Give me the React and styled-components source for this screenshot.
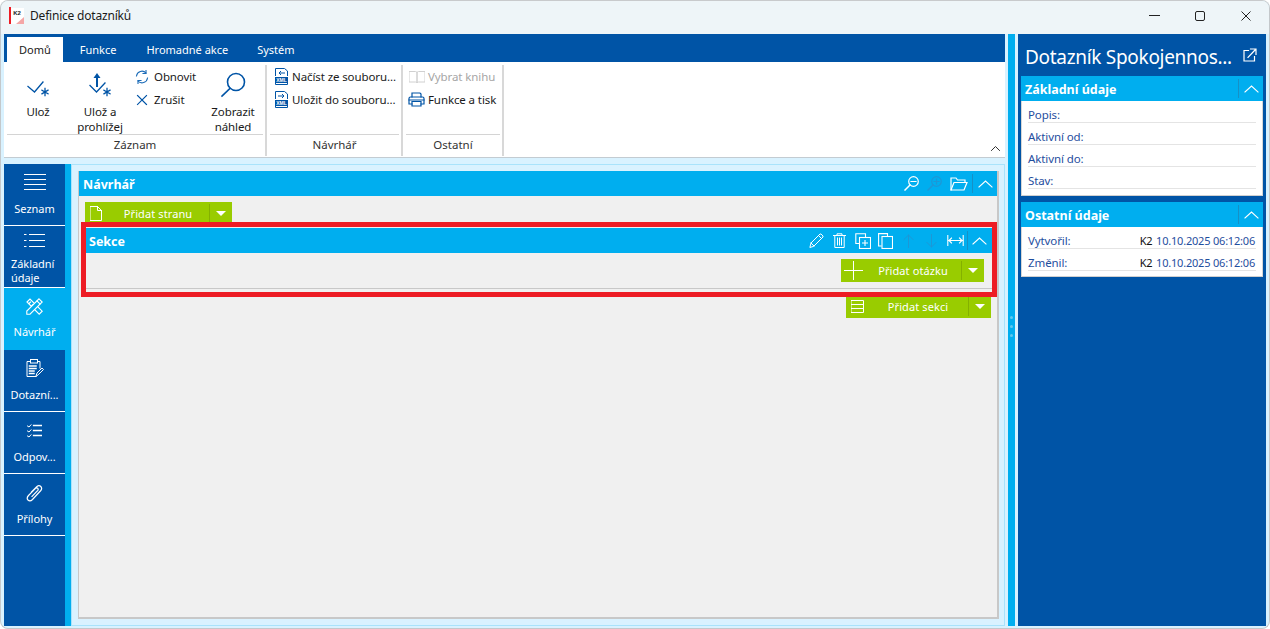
import React from "react";
import styled, { createGlobalStyle } from "styled-components";

const BLUE = "#0054a6";
const CYAN = "#00aeef";
const GREEN = "#99cc00";
const LIGHT = "#d9f2ff";

const Global = createGlobalStyle`
  html, body { margin: 0; padding: 0; background: #fff; }
  * { box-sizing: border-box; }
  body { font-family: "Noto Sans", "Open Sans", sans-serif; font-size: 12px; color: #1a1a1a; overflow: hidden; }
`;

const Win = styled.div`
  width: 1270px; height: 629px; display: flex; flex-direction: column;
  border: 1px solid #c4c8cb; border-top-color: #c8cacc; border-radius: 8px;
  overflow: hidden; background: ${LIGHT};
`;
const TitleBar = styled.div`
  height: 33px; flex: none; display: flex; align-items: center; padding: 0 0 3px 8px;
  background: #eef5f8;
`;
const TitleText = styled.span`
  margin-left: 5px; font-size: 12px; letter-spacing: -0.2px; color: #1a1a1a; flex: 1; padding-bottom: 2px;
`;
const WinBtn = styled.div`
  width: 46px; height: 28px; display: flex; align-items: center; justify-content: center;
`;
const Body = styled.div`
  flex: 1; display: flex; padding: 0 3px 2px 3px; min-height: 0;
`;
const LeftCol = styled.div`
  width: 1001px; display: flex; flex-direction: column;
`;
const Ribbon = styled.div`
  height: 124px; flex: none; display: flex; flex-direction: column; position: relative;
  border-bottom: 1px solid #c3ccd2; background: #fff;
`;
const TabBar = styled.div`
  height: 28px; flex: none; background: ${BLUE}; display: flex; align-items: flex-end; padding-left: 3px;
`;
const Tab = styled.div`
  height: 25px; padding: 0 ${p => p.$pad || 0}px; margin-right: ${p => p.$mr || 0}px;
  display: flex; align-items: center; font-size: 11px;
  color: ${p => (p.$active ? "#1a1a1a" : "#fff")};
  background: ${p => (p.$active ? "#fff" : "transparent")};
`;
const Groups = styled.div`
  flex: 1; display: flex; padding-top: 3px;
`;
const Group = styled.div`
  width: ${p => p.$w}px; height: 91px; padding: 0 2px 0 3px; border-right: 2px solid #d8d8d8;
  display: flex; flex-direction: column;
`;
const GroupBody = styled.div`
  height: 70px; display: flex; border-bottom: 1px solid #d4d4d4; flex: none;
`;
const GroupLabel = styled.div`
  flex: 1; display: flex; align-items: center; justify-content: center; color: #333; font-size: 11.5px; padding-bottom: 3px;
`;
const BigBtn = styled.div`
  width: ${p => p.$w}px; flex: none; display: flex; flex-direction: column; align-items: center;
  padding-top: 7px; line-height: 15px; font-size: 11.5px; text-align: center; letter-spacing: -0.1px;
`;
const IconSlot = styled.div`
  height: ${p => p.$h || 30}px; display: flex; align-items: ${p => p.$align || "center"}; justify-content: center;
`;
const SmallCol = styled.div`
  display: flex; flex-direction: column; width: ${p => p.$w}px; flex: none;
`;
const SmallBtn = styled.div`
  height: 23px; display: flex; align-items: center; gap: ${p => p.$gap || 3}px; padding-left: ${p => p.$pl || 0}px;
  font-size: 11.5px; letter-spacing: -0.1px; white-space: nowrap;
  color: ${p => (p.$off ? "#a6a6a6" : "#1a1a1a")};
`;
const Collapse = styled.div`
  position: absolute; right: 3px; bottom: 2px; width: 14px; height: 14px; display: flex; align-items: center; justify-content: center;
`;
const Workspace = styled.div`
  margin-top: 6px; flex: 1; display: flex; min-height: 0;
`;
const Side = styled.div`
  width: 67px; flex: none; background: linear-gradient(to right, ${BLUE} 61px, ${CYAN} 61px); display: flex; flex-direction: column;
`;
const SideItem = styled.div`
  height: 62px; flex: none; width: 61px; background: ${p => (p.$active ? CYAN : BLUE)};
  display: flex; flex-direction: column; align-items: center; color: #fff;
  border-bottom: 1px solid ${p => (p.$active ? CYAN : "#fff")};
  font-size: 11px; line-height: 14px; text-align: center; padding-top: ${p => p.$pt || 8}px;
`;
const SideLabel = styled.div`
  margin-top: ${p => p.$mt || 9}px; padding-left: ${p => (p.$left ? "7px" : 0)}; width: 100%; letter-spacing: -0.05px;
  text-align: ${p => (p.$left ? "left" : "center")};
`;
const Main = styled.div`
  flex: 1; border: 1px solid #a9e3fb; background: ${LIGHT}; padding: 6px 5px 6px 6px; display: flex; min-width: 0;
`;
const Panel = styled.div`
  flex: 1; background: #f0f0f0; border-right: 2px solid #c8c8c8; border-bottom: 2px solid #c8c8c8; border-left: 1px solid #c8c8c8;
  display: flex; flex-direction: column;
`;
const Bar = styled.div`
  height: 25px; flex: none; background: ${CYAN}; color: #fff; display: flex; align-items: center;
  font-weight: 700; font-size: 12.5px; padding-left: ${p => p.$pl || 4}px; padding-right: ${p => p.$pr || 0}px; margin-top: ${p => p.$mt || 0}px;
`;
const BarTitle = styled.div`flex: 1; padding-top: 2px;`;
const BarIcon = styled.div`
  width: ${p => p.$w || 23}px; height: 25px; display: flex; align-items: center; justify-content: center; flex: none;
`;
const BarSep = styled.div`
  width: 1px; height: 19px; background: #1690c6; flex: none;
`;
const ChevBox = styled.div`
  width: ${p => p.$w || 24}px; height: 25px; display: flex; align-items: center; justify-content: center; flex: none;
`;
const PageRow = styled.div`
  height: 26px; padding: 6px 0 0 6px; overflow: hidden; flex: none;
`;
const AddBtn = styled.div`
  width: ${p => p.$w}px; height: 23px; background: ${GREEN}; color: #fff; display: flex; align-items: center; font-size: 11px; letter-spacing: 0.1px;
`;
const AddIcon = styled.div`
  width: ${p => p.$w || 28}px; height: 23px; display: flex; align-items: center; justify-content: center; flex: none;
`;
const AddText = styled.div`flex: 1; text-align: center;`;
const AddSep = styled.div`width: 1px; height: 19px; background: #84b000; flex: none;`;
const AddArrow = styled.div`
  width: 22px; height: 23px; flex: none; display: flex; align-items: center; justify-content: center;
  &::before { content: ""; border-left: 5px solid transparent; border-right: 5px solid transparent; border-top: 5px solid #fff; }
`;
const Highlight = styled.div`
  margin-left: 2px; height: 75px; flex: none; border: 5px solid #ed1c24;
  background: #f0f0f0; display: flex; flex-direction: column;
`;
const SectionBody = styled.div`
  flex: 1; margin-top: 1px; display: flex; flex-direction: column;
`;
const SectionRow = styled.div`
  height: 35px; flex: none; padding: 5px 8px 0 0; display: flex; justify-content: flex-end; border-bottom: 1px solid #c8c8c8;
`;
const BottomRow = styled.div`
  height: 21px; flex: none; overflow: hidden; display: flex; justify-content: flex-end; align-items: flex-end; padding-right: 6px;
`;
const Splitter = styled.div`
  width: 13px; flex: none; padding: 0 3px; display: flex; background: ${LIGHT};
`;
const SplitBar = styled.div`
  width: 7px; background: ${CYAN}; display: flex; flex-direction: column; align-items: center; padding-top: 282px; gap: 6px;
`;
const Dot = styled.div`width: 3px; height: 3px; border-radius: 50%; background: #5ec9ef;`;
const Right = styled.div`
  width: 248px; flex: none; background: ${BLUE}; padding: 0 3px; display: flex; flex-direction: column;
`;
const RightTitle = styled.div`
  height: 42px; display: flex; align-items: flex-end; color: #fff; font-size: 19px; line-height: 28px; padding: 0 0 5px 4px; justify-content: space-between; letter-spacing: -0.3px;
`;
const Ext = styled.div`width: 14px; margin-right: 6px; display: flex; align-self: flex-end; padding-bottom: 9px;`;
const Card = styled.div`
  background: #fff; border-left: 1px solid #d6d6d6; border-right: 1px solid #d6d6d6; border-bottom: 1px solid #d0d0d0;
  padding: 0 6px; height: ${p => p.$h}px; margin-bottom: 6px;
`;
const CardWrap = styled.div`display: flex; flex-direction: column;`;
const Field = styled.div`
  height: 22px; border-bottom: 1px solid #e4e4e4; display: flex; align-items: center; justify-content: space-between;
  color: #1f4e9e; font-size: 11.5px; letter-spacing: -0.1px; padding: 5px 0 0 0;
`;
const Stamp = styled.span`
  color: #1f4e9e; font-size: 11px; letter-spacing: -0.2px; padding-right: 1px;
  b { font-weight: 400; color: #111; margin-right: 1px; }
`;

const Svg = ({ w = 24, h = 24, c = BLUE, sw = 1.3, vb, children }) => (
  <svg width={w} height={h} viewBox={vb || `0 0 ${w} ${h}`} fill="none" stroke={c} strokeWidth={sw} strokeLinecap="square">
    {children}
  </svg>
);
const Star = ({ x, y, c = BLUE }) => (
  <g stroke={c} strokeWidth="1.3">
    <path d={`M${x} ${y - 3.5}V${y + 3.5}M${x - 3} ${y - 1.8}L${x + 3} ${y + 1.8}M${x + 3} ${y - 1.8}L${x - 3} ${y + 1.8}`} />
  </g>
);
const SaveIcon = () => (
  <Svg w={24} h={22}><path d="M2 9.5L8.5 15L17 5" /><Star x={19} y={15} /></Svg>
);
const SaveViewIcon = () => (
  <Svg w={24} h={28}>
    <path d="M2 13.5L8.5 20L17 11" />
    <path d="M9 14V4" strokeWidth="2" />
    <path d="M9 1L5.5 6H12.5Z" fill={BLUE} stroke="none" />
    <Star x={19} y={20} />
  </Svg>
);
const RefreshIcon = () => (
  <Svg w={14} h={14} sw={1.1} c="#1c6cb8">
    <path d="M1.5 6A5.5 5.5 0 0 1 11 3" /><path d="M11 .5V3.5H8" />
    <path d="M12.5 8A5.5 5.5 0 0 1 3 11" /><path d="M3 13.5V10.500H6" />
  </Svg>
);
const CrossIcon = () => <Svg w={12} h={12} sw={1.1}><path d="M1.500 1.500L10.500 10.500M10.500 1.500L1.500 10.500" /></Svg>;
const SearchIcon = () => (
  <Svg w={26} h={26} sw={1.6}><circle cx="16" cy="10" r="8.500" /><path d="M10 16.500L2 24" /></Svg>
);
const BarSearch = ({ c = "#fff", plus }) => (
  <Svg w={15} h={15} c={c} sw={1.2}>
    <circle cx="9.500" cy="5.500" r="4.800" />
    <path d="M6 9L1 14" strokeWidth="1.500" />
    <path d={plus ? "M7 5.500H12M9.500 3V8" : "M7 5.500H12"} />
  </Svg>
);
const XmlIcon = ({ out }) => (
  <svg width="13" height="17" viewBox="0 0 13 17" fill="none" stroke={BLUE} strokeWidth="1">
    <path d="M.5 8V.5H9.500L12.500 3V8" />
    <path d={out ? "M3 5H9M7 3L9 5L7 7" : "M10 5H4M6 3L4 5L6 7"} />
    <rect x="0" y="9" width="13" height="6" fill={BLUE} stroke="none" />
    <text x="6.500" y="14" fontSize="5" fontWeight="700" textAnchor="middle" fill="#fff" stroke="none" fontFamily="Liberation Sans, sans-serif">XML</text>
    <path d="M.5 15V16.500H12.500V15" />
  </svg>
);
const BookIcon = () => (
  <Svg w={16} h={14} c="#d0d0d0" sw={1}><path d="M.5 1.500H6.500Q8 1.500 8 3V13Q8 12 6.500 12H.5ZM15.500 1.500H9.500Q8 1.500 8 3V13Q8 12 9.500 12H15.500Z" /></Svg>
);
const PrintIcon = () => (
  <Svg w={17} h={15} sw={1.2}>
    <path d="M4 5V1H12L13 2V5" /><path d="M4 12H1V6.500Q1 5 2.500 5H14.500Q16 5 16 6.500V12H13" />
    <path d="M4 9.500H13V14H4Z" /><path d="M1 8H16" />
  </Svg>
);
const White = "#fff";
const MenuIcon = () => (
  <Svg w={22} h={18} c={White} sw={1}><path d="M.5 1.500H21.500M.5 6.500H21.500M.5 11.500H21.500M.5 16.500H21.500" /></Svg>
);
const ListIcon = () => (
  <Svg w={21} h={15} c={White} sw={1}><path d="M5.500 1.500H20.500M5.500 7.500H20.500M5.500 13.500H20.500M.5 1.500H2M.5 7.500H2M.5 13.500H2" /></Svg>
);
const ToolsIcon = () => (
  <Svg w={17} h={17} c={White} sw={1.1}>
    <path d="M1 4L4 1L16.200 13.200L13.200 16.200Z" />
    <path d="M4.500 4L3 5.500M7 6.500L5.500 8M9.500 9L8 10.500" />
    <path d="M13 .8L16.200 4L4 16.200H.8V13Z" fill={CYAN} />
    <path d="M11 3L14 6" />
  </Svg>
);
const ClipboardIcon = () => (
  <Svg w={18} h={19} c={White} sw={1}>
    <path d="M4 2.500H1V17.500H10" /><path d="M12 2.500H14V9" /><rect x="4.500" y=".5" width="7" height="3.500" />
    <path d="M3.500 7H10M3.500 9.500H10M3.500 12H8M3.500 14.500H8" strokeWidth="1.500" />
    <path d="M10 17L11 14L16 9L17.500 10.500L12.500 15.500Z" />
  </Svg>
);
const CheckListIcon = () => (
  <Svg w={15} h={14} c={White} sw={1}>
    <path d="M.5 2L2 3L4 .8M.5 7L2 8L4 5.800M.5 12L2 13L4 10.800" />
    <path d="M6.500 1.500H14.500M6.500 6.500H14.500M6.500 11.500H14.500" strokeWidth="1.300" />
  </Svg>
);
const ClipIcon = () => (
  <Svg w={17} h={19} c={White} sw={1.2}>
    <path d="M5.500 8L11 2.500Q13 .8 14.800 2.500Q16.500 4.500 14.800 6.500L6.500 15.500Q4 18 2 16Q.2 14 2.500 11.500L9.800 4.200Q10.800 3.400 11.800 4.300Q12.600 5.200 11.800 6.300L6 12.500" />
  </Svg>
);
const PageIcon = () => (
  <Svg w={12} h={15} c={White} sw={1}><path d="M.5 .5H7.500L11.500 4.500V14.500H.5ZM7.500 .5V4.500H11.500" /></Svg>
);
const PlusIcon = () => <Svg w={19} h={19} c={White} sw={1}><path d="M9.500 .5V18.500M.5 9.500H18.500" /></Svg>;
const RowsIcon = () => (
  <Svg w={13} h={13} c={White} sw={1}><path d="M.5 .5H12.500V12.500H.5ZM.5 4.500H12.500M.5 8.500H12.500" /></Svg>
);
const Chevron = () => (
  <Svg w={15} h={8} c={White} sw={1.1}><path d="M1 7L7.500 1L14 7" /></Svg>
);
const MiniChevron = () => (
  <Svg w={9} h={5} c="#333" sw={1}><path d="M.5 4.500L4.500 .5L8.500 4.500" /></Svg>
);
const FolderIcon = () => (
  <Svg w={18} h={14} c={White} sw={1.2}>
    <path d="M1 13V1H6L7.500 3H15V5.500" /><path d="M1 13H14L17 5.500H4L1 13" />
  </Svg>
);
const PencilIcon = () => (
  <Svg w={15} h={15} c={White} sw={1}><path d="M1 14L2 10L11 1H12L14 3V4L5 13ZM2 10L5 13M9.500 2.500L12.500 5.500" /></Svg>
);
const TrashIcon = () => (
  <Svg w={13} h={15} c={White} sw={1}>
    <path d="M.5 2.500H12.500M4 2.500V.8H9V2.500M1.800 2.500V14.500H11.200V2.500" /><path d="M4.500 5V12M6.500 5V12M8.500 5V12" />
  </Svg>
);
const DupIcon = () => (
  <Svg w={16} h={16} c={White} sw={1.1}>
    <path d="M4 10.500H.8V.8H10.500V4" /><rect x="4.500" y="4.500" width="11" height="11" />
    <path d="M10 7.500V12.500M7.500 10H12.500" />
  </Svg>
);
const CopyIcon = () => (
  <Svg w={15} h={16} c={White} sw={1.1}>
    <path d="M3 13H.6V.6H9.500V3" /><rect x="4" y="3.500" width="10.500" height="12" />
  </Svg>
);
const ArrowUp = () => <Svg w={11} h={14} c="#1d97d6" sw={1}><path d="M5.500 13.500V1M1 5.500L5.500 1L10 5.500" /></Svg>;
const ArrowDown = () => <Svg w={11} h={14} c="#1d97d6" sw={1}><path d="M5.500 .5V13M1 8.500L5.500 13L10 8.500" /></Svg>;
const WidthIcon = () => (
  <Svg w={17} h={11} c={White} sw={1.1}><path d="M.8 .5V10.500M16.200 .5V10.500M1.500 5.500H15.500M4.500 3L2 5.500L4.500 8M12.500 3L15 5.500L12.500 8" /></Svg>
);
const ExternalIcon = () => (
  <Svg w={14} h={14} c={White} sw={1.2}>
    <path d="M5.500 2.500H1V13H11.500V8.500" /><path d="M5 9.500L12.500 1.500M7.500 1H13V6.500" />
  </Svg>
);
const Logo = () => (
  <svg width="16" height="18" viewBox="0 0 16 18">
    <rect x="0" y="0" width="2" height="17" fill="#ed1c24" />
    <rect x="2" y="1" width="13" height="16" fill="#fff" />
    <text x="8" y="8" fontSize="6" fontWeight="700" textAnchor="middle" fill="#222" fontFamily="Liberation Sans, sans-serif">K2</text>
    <path d="M15 10V17H7Z" fill="#f4a6a6" />
  </svg>
);

const CardHead = ({ title }) => (
  <Bar $pl={4}>
    <BarTitle>{title}</BarTitle>
    <BarSep />
    <ChevBox $w={24}><Chevron /></ChevBox>
  </Bar>
);

export default function App() {
  return (
    <Win>
      <Global />
      <TitleBar>
        <Logo />
        <TitleText>Definice dotazníků</TitleText>
        <WinBtn><svg width="11" height="2"><path d="M0 .5H11" stroke="#222" /></svg></WinBtn>
        <WinBtn><svg width="10" height="10"><rect x=".5" y=".5" width="9" height="9" rx="1.500" fill="none" stroke="#222" /></svg></WinBtn>
        <WinBtn><svg width="10" height="10"><path d="M.5 .5L9.500 9.500M9.500 .5L.5 9.500" stroke="#222" /></svg></WinBtn>
      </TitleBar>
      <Body>
        <LeftCol>
          <Ribbon>
            <TabBar>
              <Tab $active $pad={12} $mr={17}>Domů</Tab>
              <Tab $mr={30}>Funkce</Tab>
              <Tab $mr={29}>Hromadné akce</Tab>
              <Tab>Systém</Tab>
            </TabBar>
            <Groups>
              <Group $w={263}>
                <GroupBody>
                  <BigBtn $w={62}><IconSlot $h={32}><SaveIcon /></IconSlot>Ulož</BigBtn>
                  <BigBtn $w={62}><IconSlot $h={32} $align="flex-start"><SaveViewIcon /></IconSlot>Ulož a<br />prohlížej</BigBtn>
                  <SmallCol $w={72}>
                    <SmallBtn $gap={5} $pl={4}><RefreshIcon />Obnovit</SmallBtn>
                    <SmallBtn $gap={6} $pl={5}><CrossIcon />Zrušit</SmallBtn>
                  </SmallCol>
                  <BigBtn $w={60}><IconSlot $h={32} $align="flex-start"><SearchIcon /></IconSlot>Zobrazit<br />náhled</BigBtn>
                </GroupBody>
                <GroupLabel>Záznam</GroupLabel>
              </Group>
              <Group $w={136}>
                <GroupBody>
                  <SmallCol $w={131}>
                    <SmallBtn $pl={5} $gap={4}><XmlIcon />Načíst ze souboru...</SmallBtn>
                    <SmallBtn $pl={5} $gap={4}><XmlIcon out />Uložit do souboru...</SmallBtn>
                  </SmallCol>
                </GroupBody>
                <GroupLabel>Návrhář</GroupLabel>
              </Group>
              <Group $w={101}>
                <GroupBody>
                  <SmallCol $w={96}>
                    <SmallBtn $off $pl={3} $gap={3}><BookIcon />Vybrat knihu</SmallBtn>
                    <SmallBtn $pl={2} $gap={3}><PrintIcon />Funkce a tisk</SmallBtn>
                  </SmallCol>
                </GroupBody>
                <GroupLabel>Ostatní</GroupLabel>
              </Group>
            </Groups>
            <Collapse><MiniChevron /></Collapse>
          </Ribbon>
          <Workspace>
            <Side>
              <SideItem $pt={8}><IconSlot $h={20}><MenuIcon /></IconSlot><SideLabel $mt={10}>Seznam</SideLabel></SideItem>
              <SideItem $pt={4}><IconSlot $h={20}><ListIcon /></IconSlot><SideLabel $mt={7} $left>Základní údaje</SideLabel></SideItem>
              <SideItem $active $pt={8}><IconSlot $h={20}><ToolsIcon /></IconSlot><SideLabel $mt={9}>Návrhář</SideLabel></SideItem>
              <SideItem $pt={8}><IconSlot $h={20}><ClipboardIcon /></IconSlot><SideLabel $mt={10}>Dotazní...</SideLabel></SideItem>
              <SideItem $pt={9}><IconSlot $h={20}><CheckListIcon /></IconSlot><SideLabel $mt={9}>Odpov...</SideLabel></SideItem>
              <SideItem $pt={9}><IconSlot $h={20}><ClipIcon /></IconSlot><SideLabel $mt={9}>Přílohy</SideLabel></SideItem>
            </Side>
            <Main>
              <Panel>
                <Bar $pl={4}>
                  <BarTitle>Návrhář</BarTitle>
                  <BarIcon $w={23}><BarSearch /></BarIcon>
                  <BarIcon $w={23}><BarSearch c="#1d97d6" plus /></BarIcon>
                  <BarIcon $w={26}><FolderIcon /></BarIcon>
                  <BarSep />
                  <ChevBox $w={24}><Chevron /></ChevBox>
                </Bar>
                <PageRow>
                  <AddBtn $w={147}>
                    <AddIcon $w={22}><PageIcon /></AddIcon>
                    <AddText>Přidat stranu</AddText>
                    <AddSep />
                    <AddArrow />
                  </AddBtn>
                </PageRow>
                <Highlight>
                  <Bar $pl={3} $mt={1} $pr={1}>
                    <BarTitle>Sekce</BarTitle>
                    <BarIcon><PencilIcon /></BarIcon>
                    <BarIcon><TrashIcon /></BarIcon>
                    <BarIcon><DupIcon /></BarIcon>
                    <BarIcon><CopyIcon /></BarIcon>
                    <BarIcon><ArrowUp /></BarIcon>
                    <BarIcon><ArrowDown /></BarIcon>
                    <BarIcon $w={24}><WidthIcon /></BarIcon>
                    <BarSep />
                    <ChevBox $w={23}><Chevron /></ChevBox>
                  </Bar>
                  <SectionBody>
                    <SectionRow>
                      <AddBtn $w={143}>
                        <AddIcon $w={24}><PlusIcon /></AddIcon>
                        <AddText>Přidat otázku</AddText>
                        <AddSep />
                        <AddArrow />
                      </AddBtn>
                    </SectionRow>
                  </SectionBody>
                </Highlight>
                <BottomRow>
                  <AddBtn $w={145}>
                    <AddIcon $w={22}><RowsIcon /></AddIcon>
                    <AddText>Přidat sekci</AddText>
                    <AddSep />
                    <AddArrow />
                  </AddBtn>
                </BottomRow>
              </Panel>
            </Main>
          </Workspace>
        </LeftCol>
        <Splitter>
          <SplitBar><Dot /><Dot /><Dot /></SplitBar>
        </Splitter>
        <Right>
          <RightTitle>
            <span>Dotazník Spokojennos...</span>
            <Ext><ExternalIcon /></Ext>
          </RightTitle>
          <CardWrap>
            <CardHead title="Základní údaje" />
            <Card $h={95}>
              <Field>Popis:</Field>
              <Field>Aktivní od:</Field>
              <Field>Aktivní do:</Field>
              <Field>Stav:</Field>
            </Card>
          </CardWrap>
          <CardWrap>
            <CardHead title="Ostatní údaje" />
            <Card $h={50}>
              <Field>Vytvořil:<Stamp><b>K2</b> 10.10.2025 06:12:06</Stamp></Field>
              <Field>Změnil:<Stamp><b>K2</b> 10.10.2025 06:12:06</Stamp></Field>
            </Card>
          </CardWrap>
        </Right>
      </Body>
    </Win>
  );
}
